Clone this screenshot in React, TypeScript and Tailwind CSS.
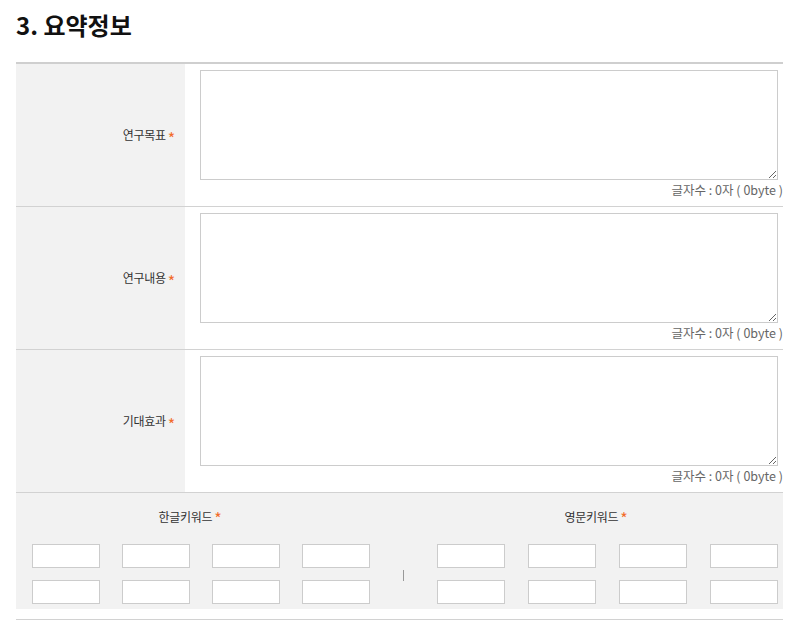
import React from 'react'

const FIELDS = ['연구목표', '연구내용', '기대효과']

const FONT = { fontFamily: '"Malgun Gothic", "Noto Sans CJK KR", sans-serif' }

function Star() {
  return <span className="ml-[2px] text-[16px] leading-none text-[#f26c2b] relative top-[3px]">*</span>
}

function KeywordGrid({ gap }: { gap: string }) {
  return (
    <div className={`grid grid-cols-[68px_68px_68px_68px] gap-y-[12px] ${gap}`}>
      {Array.from({ length: 8 }).map((_, i) => (
        <input key={i} type="text" className="h-[24px] w-[68px] border border-[#cccccc] bg-white outline-none" />
      ))}
    </div>
  )
}

export default function App() {
  return (
    <div className="min-h-screen bg-white pl-4 pr-[10px] text-[#333]" style={FONT}>
      {/* Title */}
      <h2 className="mt-[7px] h-[36px] text-[24px] leading-[36px] font-semibold text-[#111]">3. 요약정보</h2>

      {/* Table */}
      <div className="mt-[19px] border-t-2 border-[#cfcfcf]">
        {FIELDS.map((label) => (
          <div key={label} className="flex border-b border-[#d2d2d2]">
            <div className="w-[169px] bg-[#f2f2f2] flex items-center justify-end pr-[10px] text-[12px] text-[#333] tracking-[-0.3px]">
              {label}
              <Star />
            </div>
            <div className="flex-1 pl-[15px] pr-[5px] pt-[6px] pb-[6px]">
              <textarea className="block h-[110px] w-full border border-[#cccccc] bg-white outline-none" />
              <div className="text-right text-[12.5px] leading-[20px] text-[#666] mr-[-5px] whitespace-pre">
                글자수 : 0자 ( 0byte )
              </div>
            </div>
          </div>
        ))}

        {/* Keywords */}
        <div className="bg-[#f2f2f2] pt-[14px] pb-[5px]">
          <div className="flex text-[12px] leading-[20px] tracking-[-0.3px]">
            <div className="w-[348px] text-center">
              한글키워드
              <Star />
            </div>
            <div className="ml-[45px] w-[374px] text-center">
              영문키워드
              <Star />
            </div>
          </div>
          <div className="mt-[17px] flex pl-4">
            <KeywordGrid gap="gap-x-[22px]" />
            <div className="flex w-[67px] items-center justify-center">
              <span className="block h-[11px] w-px bg-[#999] mt-[2px]" />
            </div>
            <KeywordGrid gap="gap-x-[23px]" />
          </div>
        </div>
        <div className="h-[11px] border-b border-[#d2d2d2]" />
      </div>
    </div>
  )
}
